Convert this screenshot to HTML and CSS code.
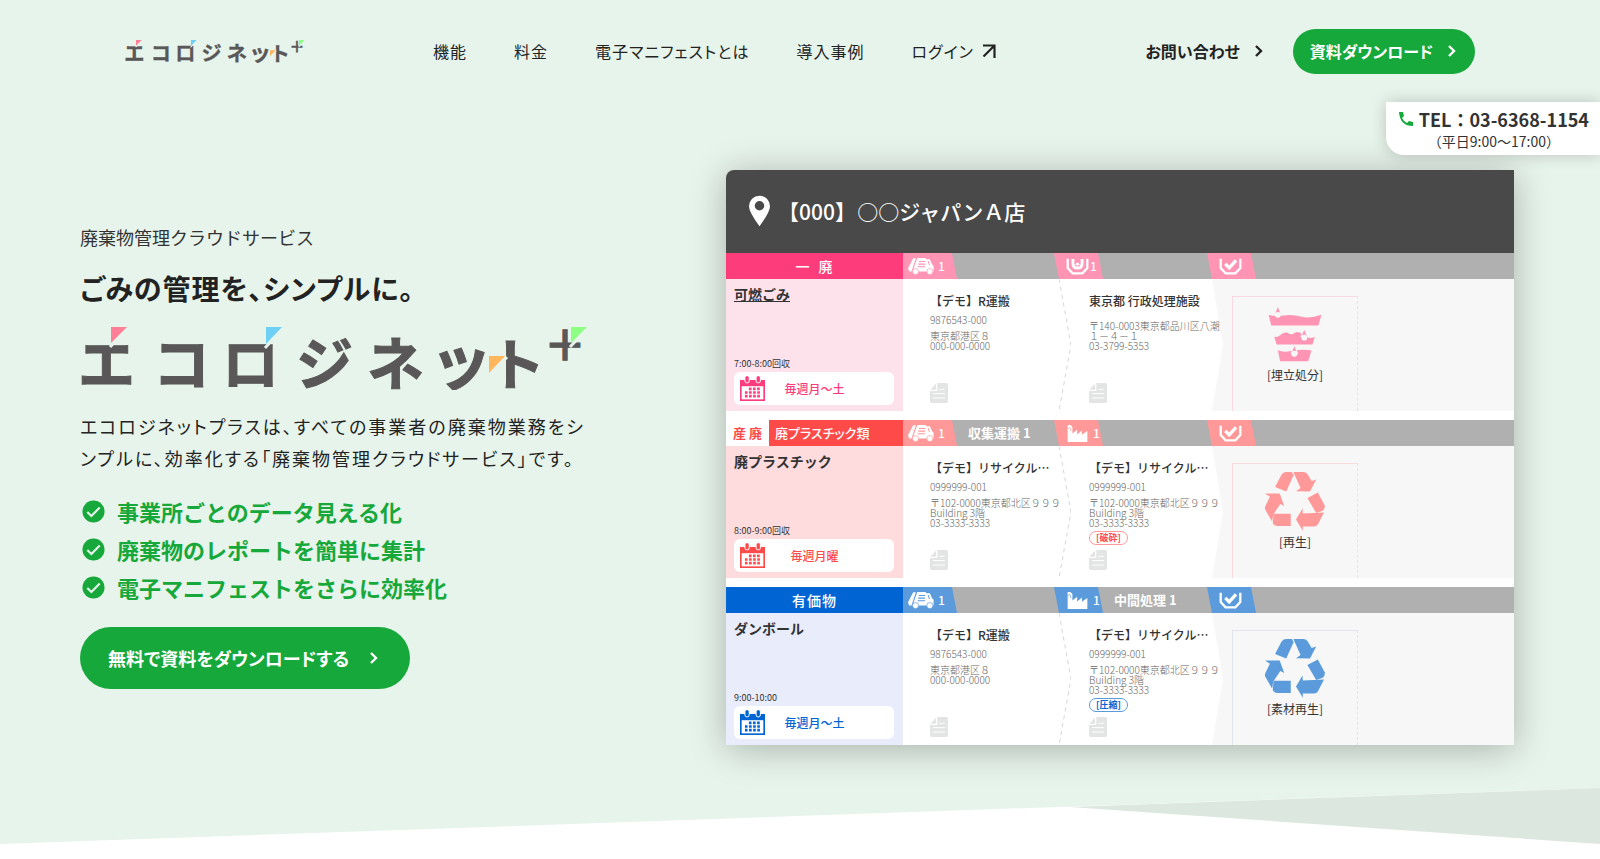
FILE: index.html
```html
<!DOCTYPE html>
<html lang="ja">
<head>
<meta charset="utf-8">
<meta name="viewport" content="width=device-width, initial-scale=1">
<title>エコロジネット+ | 廃棄物管理クラウドサービス</title>
<link rel="stylesheet" href="styles.css">
</head>
<body>
<svg class="sprite" aria-hidden="true">
  <symbol id="logo" viewBox="0 0 508 64">
    <g class="logo-letters">
      <text font-size="57" y="59"><tspan x="-2">エ</tspan><tspan x="73">コ</tspan><tspan x="142">ロ</tspan><tspan x="216">ジ</tspan><tspan x="287">ネ</tspan><tspan x="350" font-size="62">ッ</tspan><tspan x="409" font-size="56">ト</tspan></text>
      <text font-size="42" y="35" x="464">＋</text>
    </g>
    <path d="M30 21L49 1M185 22L204 1M490 21L509 1M408 52L427 31" stroke="#e7f4eb" stroke-width="3"/>
    <path d="M31 1h16L31 17z" fill="#ff7f96"/>
    <path d="M186 1h16l-16 17z" fill="#6fd0f5"/>
    <path d="M409 30h16l-16 17z" fill="#ffb65c"/>
    <path d="M491 1h16l-16 16z" fill="#8dff82"/>
  </symbol>
  <symbol id="chev" viewBox="0 0 10 14"><path d="M2 2l5 5-5 5" fill="none" stroke="currentColor" stroke-width="2.4"/></symbol>
  <symbol id="check" viewBox="0 0 24 24"><circle cx="12" cy="12" r="11.5" fill="currentColor"/><path d="M5.500 12.500l4.300 4.300 8.700-9" fill="none" stroke="#e7f4eb" stroke-width="2.200"/></symbol>
  <symbol id="cal" viewBox="0 0 76 76">
    <path d="M0 12h76v64H0z" fill="currentColor"/><path d="M5 31h66v40H5z" fill="#fff"/>
    <g fill="currentColor" stroke="#fff" stroke-width="3"><rect x="15" y="-1" width="13" height="22" rx="6"/><rect x="49" y="-1" width="13" height="22" rx="6"/></g>
    <path d="M27 39h36M15 50h48M15 61h48" stroke="currentColor" stroke-width="8" stroke-dasharray="8 4.500"/>
  </symbol>
  <symbol id="truck" viewBox="0 0 76 50">
    <path d="M15 1h8L10 40H3L0 30z" fill="currentColor"/>
    <path d="M27 0h24l3 4h10l7 15 4 4v17H13z" fill="currentColor"/>
    <path d="M32 10h18M30 18h20M28 26h22M59 9l4 11" stroke="var(--soft)" stroke-width="3" fill="none"/>
    <g fill="currentColor" stroke="var(--soft)" stroke-width="2"><circle cx="22" cy="40" r="9"/><circle cx="64" cy="40" r="9"/></g>
  </symbol>
  <symbol id="landfill" viewBox="0 0 68 52">
    <path d="M4 2v29l15 16h30l15-16V2" fill="none" stroke="currentColor" stroke-width="7"/>
    <path d="M20 3v14q0 14 14 14t14-14V3" fill="none" stroke="currentColor" stroke-width="9"/>
    <path d="M34 27v-9M28 21l6-6 6 6" fill="none" stroke="currentColor" stroke-width="4"/>
  </symbol>
  <symbol id="factory" viewBox="0 0 58 50"><path d="M0 50V0h8l6 6v19l14-11v14l14-12v13l16-11v32z" fill="currentColor"/><path d="M0 12l6-5M7 8l3 10" stroke="var(--soft)" stroke-width="2"/></symbol>
  <symbol id="done" viewBox="0 0 68 52"><path d="M4 2v29l15 16h30l15-16V2" fill="none" stroke="currentColor" stroke-width="7"/><path d="M18 18l12 12L51 7" fill="none" stroke="currentColor" stroke-width="10"/></symbol>
  <symbol id="file" viewBox="0 0 54 60"><path d="M22 0h27q5 0 5 5v50q0 5-5 5H5q-5 0-5-5V24h22z" fill="#e2e5e4"/><path d="M18 2v18H1z" fill="#e2e5e4"/><path d="M28 19h16M9 32h36M9 45h36" stroke="#fff" stroke-width="3"/></symbol>
  <symbol id="recycle" viewBox="0 0 188 184">
    <g fill="currentColor"><path d="M33 49L52 12Q57 3 66 3H84L90 12 67 63z"/><path d="M89 3h32q8 0 12 8l12 20 14-5-19 37-43-1 14-10z"/><path d="M132 83l32-17 21 39q2 12-8 18l-18 6z"/><path d="M97 149l20-34 1 15 65-3-19 37q-4 6-12 6h-34v13z"/><path d="M28 131h53v38H40q-8 0-14-8z"/><path d="M2 69h45l14 38-12-6-22 33-3 22L3 119q-3-6 1-13l13-27z"/></g>
  </symbol>
  <symbol id="layers" viewBox="-14 -6 188 180">
    <g fill="#ff94b4"><path d="M0 26q20 6 45 2 25-5 55 4 25 6 60-6l-9 32H8z"/><path d="M17 92q8 4 18-4 13-14 28-5 8 5 15-2 15-8 25 6 15 15 37 6l-7 23H24z"/><path d="M28 133q12 6 30 4 40-8 72-3l-10 33H35z"/></g>
    <g fill="#ff94b4" stroke="#f7f7f7" stroke-width="3"><path d="M28-2L18 24h20zM108 68L98 92h20zM78 117l-10 26h20z"/></g>
    <g fill="#f7f7f7"><circle cx="28" cy="26" r="9"/><circle cx="108" cy="95" r="9"/><circle cx="78" cy="144" r="9"/></g>
  </symbol>
</svg>

<div class="hero">
  <header class="header">
    <a class="brand" href="#" aria-label="エコロジネット+"><svg><use href="#logo"/></svg></a>
    <nav class="nav">
      <a href="#">機能</a><a href="#">料金</a><a href="#">電子マニフェストとは</a><a href="#">導入事例</a>
      <a href="#">ログイン<svg class="ext" viewBox="0 0 14 14"><path d="M1 1.500h11.500V14M12 2L1.500 12.500" fill="none" stroke="currentColor" stroke-width="2.200"/></svg></a>
    </nav>
    <div class="actions">
      <a class="contact" href="#">お問い合わせ<svg class="chev"><use href="#chev"/></svg></a>
      <a class="pill" href="#">資料ダウンロード<svg class="chev"><use href="#chev"/></svg></a>
    </div>
  </header>

  <aside class="tel">
    <a href="tel:03-6368-1154"><svg viewBox="0 0 14 14"><path d="M0 0h4l1 4-2 2q2 4 5 5l2-2 4 1v4Q1 14 0 0z" fill="#16a83a"/></svg>TEL：03-6368-1154</a>
    <p>（平日9:00～17:00）</p>
  </aside>

  <main class="main">
    <section class="intro">
      <p class="lead">廃棄物管理クラウドサービス</p>
      <h1>ごみの管理を、シンプルに。</h1>
      <svg class="big-logo" role="img" aria-label="エコロジネット+"><use href="#logo"/></svg>
      <p class="desc">エコロジネットプラスは、すべての事業者の廃棄物業務をシンプルに、効率化する「廃棄物管理クラウドサービス」です。</p>
      <ul class="points">
        <li><svg><use href="#check"/></svg>事業所ごとのデータ見える化</li>
        <li><svg><use href="#check"/></svg>廃棄物のレポートを簡単に集計</li>
        <li><svg><use href="#check"/></svg>電子マニフェストをさらに効率化</li>
      </ul>
      <a class="cta" href="#">無料で資料をダウンロードする<svg class="chev"><use href="#chev"/></svg></a>
    </section>

    <section class="card">
      <h2 class="card-head"><svg viewBox="0 0 22 32"><path fill-rule="evenodd" d="M11 0a11 11 0 0 1 11 11q0 6-11 21Q0 17 0 11A11 11 0 0 1 11 0zm0 5.500a5 5 0 1 0 0 10 5 5 0 0 0 0-10z" fill="#fff"/></svg>【000】&#8202;○○ジャパンＡ店</h2>

      <article class="row pink">
        <div class="kind"><span class="kind-main">一&ensp;廃</span></div>
        <div class="bar first"><span class="tag"><svg><use href="#truck"/></svg>1</span></div>
        <div class="bar"><span class="tag tight"><svg><use href="#landfill"/></svg>1</span></div>
        <div class="bar"><span class="tag"><svg><use href="#done"/></svg></span></div>
        <div class="item">
          <h3 class="underlined">可燃ごみ</h3><p class="time">7:00-8:00回収</p>
          <p class="days"><svg><use href="#cal"/></svg><span>毎週月～土</span></p>
        </div>
        <div class="step"><h4>【デモ】R運搬</h4><p class="code">9876543-000</p><p class="addr">東京都港区８<br>000-000-0000</p><svg class="file"><use href="#file"/></svg></div>
        <div class="step last"><svg class="wedge" viewBox="0 0 12 132" preserveAspectRatio="none"><path d="M0 0l12 66L0 132"/></svg><h4>東京都 行政処理施設</h4><p class="addr lone">〒140-0003東京都品川区八潮<br>１－４－１<br>03-3799-5353</p><svg class="file"><use href="#file"/></svg></div>
        <div class="end"><div class="result"><svg><use href="#layers"/></svg>[埋立処分]</div></div>
      </article>

      <article class="row red">
        <div class="kind"><span class="kind-side">産 廃</span><span class="kind-main sub">廃プラスチック類</span></div>
        <div class="bar first"><span class="tag"><svg><use href="#truck"/></svg>1</span>収集運搬 1</div>
        <div class="bar"><span class="tag"><svg><use href="#factory"/></svg>1</span></div>
        <div class="bar"><span class="tag"><svg><use href="#done"/></svg></span></div>
        <div class="item">
          <h3>廃プラスチック</h3><p class="time">8:00-9:00回収</p>
          <p class="days"><svg><use href="#cal"/></svg><span>毎週月曜</span></p>
        </div>
        <div class="step"><h4>【デモ】リサイクル…</h4><p class="code">0999999-001</p><p class="addr">〒102-0000東京都北区９９９<br>Building 3階<br>03-3333-3333</p><svg class="file"><use href="#file"/></svg></div>
        <div class="step last"><svg class="wedge" viewBox="0 0 12 132" preserveAspectRatio="none"><path d="M0 0l12 66L0 132"/></svg><h4>【デモ】リサイクル…</h4><p class="code">0999999-001</p><p class="addr">〒102-0000東京都北区９９９<br>Building 3階<br>03-3333-3333</p><span class="badge">[破砕]</span><svg class="file"><use href="#file"/></svg></div>
        <div class="end"><div class="result"><svg><use href="#recycle"/></svg>[再生]</div></div>
      </article>

      <article class="row blue">
        <div class="kind"><span class="kind-main">有価物</span></div>
        <div class="bar first"><span class="tag"><svg><use href="#truck"/></svg>1</span></div>
        <div class="bar"><span class="tag"><svg><use href="#factory"/></svg>1</span>中間処理 1</div>
        <div class="bar"><span class="tag"><svg><use href="#done"/></svg></span></div>
        <div class="item">
          <h3>ダンボール</h3><p class="time">9:00-10:00</p>
          <p class="days"><svg><use href="#cal"/></svg><span>毎週月～土</span></p>
        </div>
        <div class="step"><h4>【デモ】R運搬</h4><p class="code">9876543-000</p><p class="addr">東京都港区８<br>000-000-0000</p><svg class="file"><use href="#file"/></svg></div>
        <div class="step last"><svg class="wedge" viewBox="0 0 12 132" preserveAspectRatio="none"><path d="M0 0l12 66L0 132"/></svg><h4>【デモ】リサイクル…</h4><p class="code">0999999-001</p><p class="addr">〒102-0000東京都北区９９９<br>Building 3階<br>03-3333-3333</p><span class="badge">[圧縮]</span><svg class="file"><use href="#file"/></svg></div>
        <div class="end"><div class="result"><svg><use href="#recycle"/></svg>[素材再生]</div></div>
      </article>
    </section>
  </main>
</div>
<svg class="slope" viewBox="0 0 1600 56" preserveAspectRatio="none" aria-hidden="true"><path d="M0 0h1600L0 56z" fill="#e7f4eb"/><path d="M1070 19L1600 0v56z" fill="#dbe7df"/></svg>
</body>
</html>
```
FILE: styles.css
```css
* { box-sizing: border-box; }
body { margin: 0; background: #fff; color: #222; font-family: "Noto Sans CJK JP", sans-serif; font-size: 16px; line-height: 24px; }
h1, h2, h3, h4, p, ul { margin: 0; padding: 0; }
a { color: inherit; text-decoration: none; }
svg { display: block; flex: none; }
.sprite { position: absolute; width: 0; height: 0; }
.logo-letters { fill: #595757; stroke: #595757; stroke-width: 1px; font-weight: 700; }

.hero { position: relative; background: #e7f4eb; padding-bottom: 43px; }

.header { display: flex; align-items: center; height: 102px; padding: 0 125px; }
.brand svg { width: 180px; height: 24px; }
.nav { display: flex; gap: 47px; margin-left: 128px; letter-spacing: 1px; font-feature-settings: "palt"; }
.nav a { display: flex; align-items: center; gap: 8px; }
.ext { width: 14px; height: 14px; }
.actions { display: flex; align-items: center; gap: 29px; margin-left: auto; font-weight: 700; font-feature-settings: "palt"; }
.contact, .pill, .cta { display: flex; align-items: center; }
.contact { gap: 14px; }
.chev { width: 10px; height: 14px; }
.pill { gap: 14px; height: 45px; padding: 0 18px 0 17px; border-radius: 23px; background: #16a83a; color: #fff; }

.tel { position: absolute; z-index: 2; top: 102px; right: 0; padding: 5px 11px 4px 13px; border-radius: 0 0 0 18px; background: #fff; box-shadow: 0 0 16px rgba(0, 0, 0, .2); color: #333; }
.tel a { display: flex; align-items: center; gap: 6px; font-size: 18px; line-height: 24px; font-weight: 700; }
.tel svg { width: 14px; height: 14px; }
.tel p { font-size: 14px; line-height: 20px; text-align: center; }

.main { display: grid; grid-template-columns: minmax(0, 508px) minmax(0, 788px); justify-content: space-between; align-items: start; padding: 68px 86px 0 80px; }
.intro { padding-top: 54px; }
.lead { font-size: 18px; line-height: 26px; color: #333; }
h1 { margin-top: 18px; font-size: 28px; line-height: 40px; font-weight: 700; letter-spacing: 1px; font-feature-settings: "palt"; }
.big-logo { width: 508px; height: 64px; margin-top: 18px; }
.desc { margin-top: 20px; font-size: 18px; line-height: 32px; letter-spacing: 2px; font-feature-settings: "palt"; }
.points { display: grid; gap: 6px; margin-top: 21px; list-style: none; color: #16a83a; font-size: 22px; line-height: 32px; font-weight: 700; }
.points li { display: flex; align-items: center; gap: 12px; padding-left: 2px; }
.points svg { width: 23px; height: 23px; }
.cta { width: fit-content; gap: 20px; height: 62px; margin-top: 24px; padding: 0 31px 0 28px; border-radius: 31px; background: #16a83a; color: #fff; font-size: 18px; font-weight: 700; font-feature-settings: "palt"; }

.card { border-radius: 8px 0 0 0; background: #fff; box-shadow: 0 4px 36px rgba(0, 0, 0, .28); color: #333; }
.card-head { display: flex; align-items: center; gap: 8px; height: 83px; padding: 0 0 2px 23px; border-radius: 8px 0 0 0; background: #494949; color: #fff; font-size: 21px; font-weight: 500; }
.card-head svg { width: 21px; height: 32px; }
.row { display: grid; grid-template-columns: minmax(0, 177fr) minmax(0, 156fr) minmax(0, 153fr) minmax(0, 302fr); grid-template-rows: 26px 132px; }
.row + .row { margin-top: 9px; }
.pink { --main: #fd3c7b; --soft: #ff94b4; --pale: #fde2eb; --line: #fbd9e2; }
.red { --main: #ff4a4a; --soft: #ff9999; --pale: #fedcde; --line: #fbdcdc; }
.blue { --main: #0064d2; --soft: #5b9bdb; --pale: #e9edfb; --line: #e0e4f0; }

.kind { display: flex; background: var(--main); color: #fff; font-size: 14px; line-height: 26px; font-weight: 500; }
.kind-main { flex: 1; text-align: center; letter-spacing: 1px; }
.kind-side { width: 43px; background: #fff; color: var(--main); font-weight: 700; font-size: 13px; text-align: center; }
.kind-main.sub { padding-left: 6px; text-align: left; letter-spacing: 0; font-size: 13px; font-feature-settings: "palt"; }
.bar { display: flex; gap: 11px; background: #b0b0b0; color: #fff; font-size: 13px; line-height: 26px; font-weight: 700; white-space: nowrap; }
.tag { display: flex; align-items: center; gap: 4px; width: 49px; margin-left: -5px; padding-left: 12px; background: var(--soft); clip-path: polygon(0 0, 44px 0, 100% 100%, 5px 100%); font-size: 12px; line-height: 34px; font-weight: 500; }
.tag.tight { gap: 1px; }
.first .tag { width: 54px; margin-left: 0; padding-left: 5px; clip-path: polygon(0 0, 49px 0, 100% 100%, 0 100%); }
.tag svg { width: 23px; height: 17px; }
.first .tag svg { width: 26px; }

.item { display: flex; flex-direction: column; padding: 5px 9px 6px 8px; background: var(--pale); }
h3 { font-size: 14px; line-height: 20px; font-weight: 700; }
.underlined { text-decoration: underline; }
.time { margin-top: auto; font-size: 9px; line-height: 16px; }
.days { display: flex; align-items: center; height: 33px; padding: 0 6px; border-radius: 6px; background: #fff; color: var(--main); font-size: 12px; line-height: 20px; font-weight: 500; }
.days svg { width: 25px; height: 25px; }
.days span { flex: 1; padding-right: 24px; text-align: center; }

.step { position: relative; display: flex; flex-direction: column; align-items: flex-start; padding: 14px 0 8px 27px; white-space: nowrap; }
.step.last { padding-left: 30px; }
.step.last::after { content: ""; position: absolute; z-index: 1; top: 0; bottom: 0; left: 100%; width: 11px; background: #fff; clip-path: polygon(0 0, 100% 50%, 0 100%); }
.wedge { position: absolute; top: 0; left: 0; width: 12px; height: 100%; fill: none; stroke: #d6d6d6; stroke-dasharray: 4 4; }
h4 { font-size: 12px; line-height: 16px; font-weight: 500; }
.code, .addr { margin-top: 6px; color: #666; font-size: 10px; line-height: 10px; font-weight: 300; }
.addr { position: relative; z-index: 2; }
.addr.lone { margin-top: 12px; }
.badge { margin-top: 3px; padding: 0 6px; border: 1px solid var(--soft); border-radius: 7px; color: var(--main); font-size: 9px; line-height: 12px; font-weight: 700; }
.file { width: 18px; height: 20px; margin-top: auto; }

.end { padding: 17px 0 0 20px; background: #f7f7f7; }
.result { display: flex; flex-direction: column; align-items: center; gap: 1px; width: 126px; height: 100%; padding-top: 7px; border: 1px solid var(--line); border-right-style: dashed; border-bottom: 0; color: #333; font-size: 12px; line-height: 20px; }
.result svg { width: 62px; height: 60px; color: var(--soft); }

.slope { width: 100%; height: 56px; }
```
